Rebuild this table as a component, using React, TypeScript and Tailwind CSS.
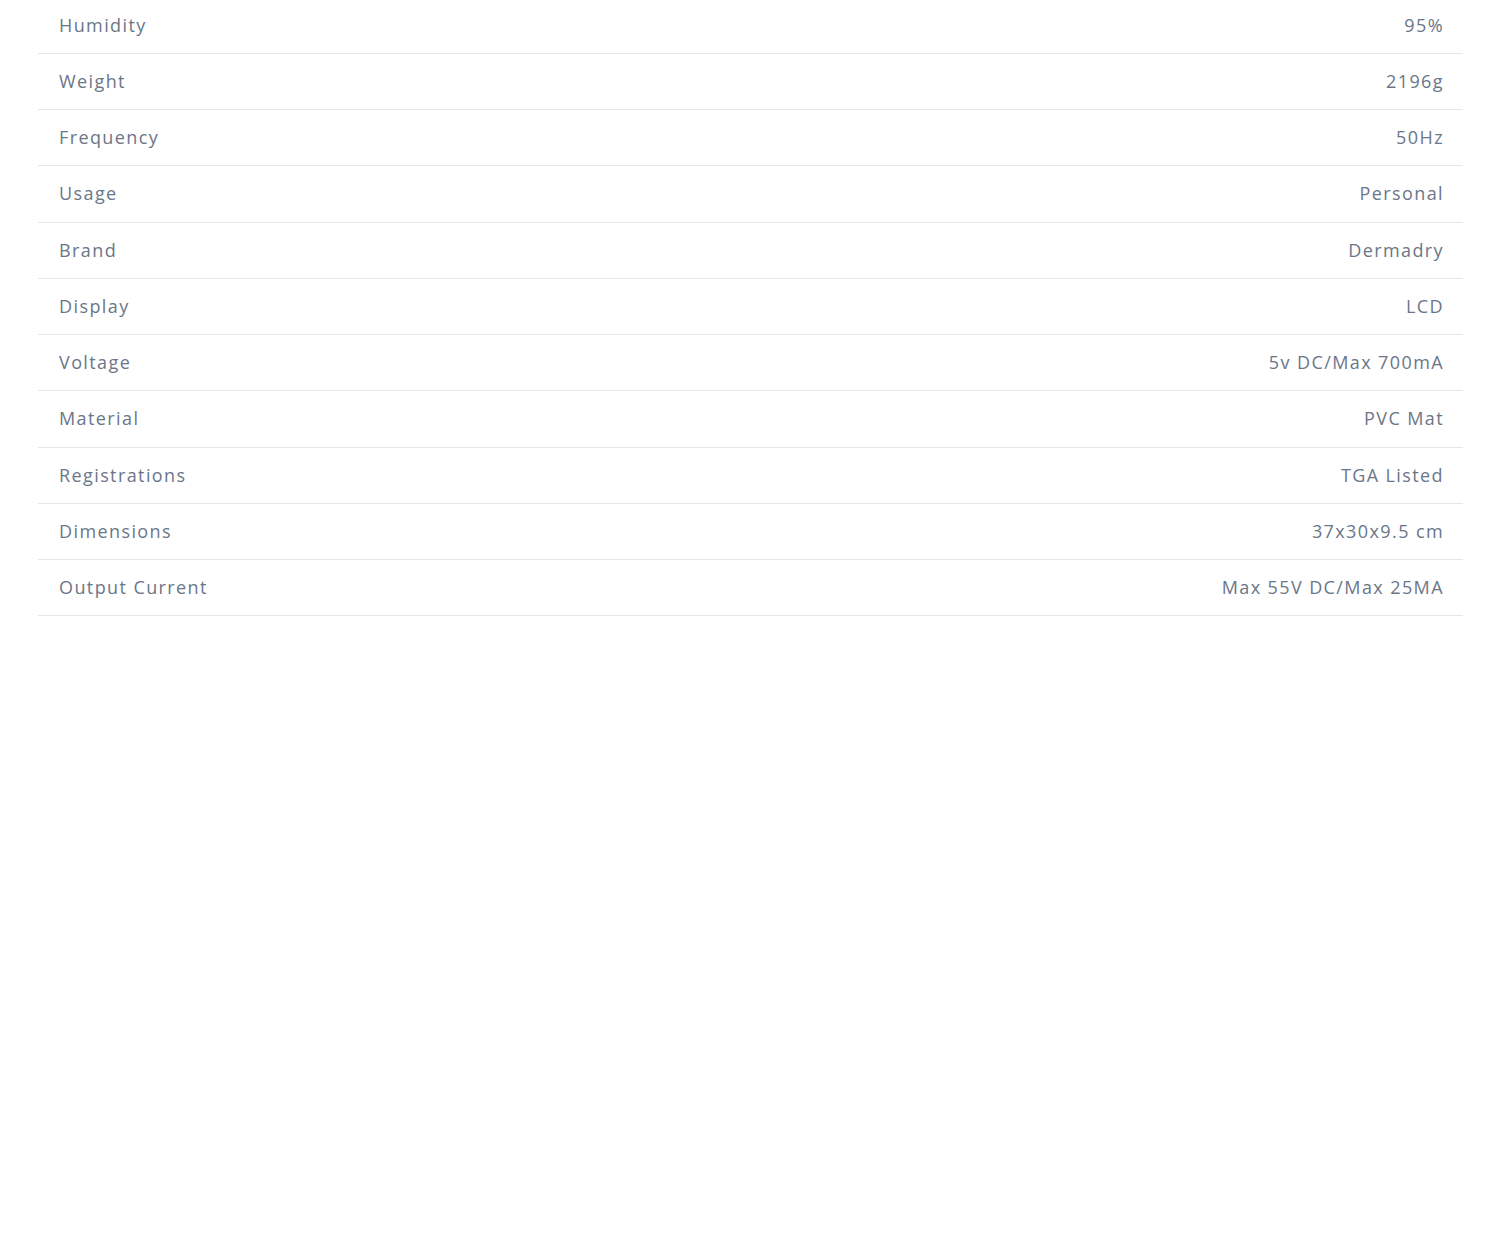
const specs: [string, string][] = [
  ["Humidity", "95%"],
  ["Weight", "2196g"],
  ["Frequency", "50Hz"],
  ["Usage", "Personal"],
  ["Brand", "Dermadry"],
  ["Display", "LCD"],
  ["Voltage", "5v DC/Max 700mA"],
  ["Material", "PVC Mat"],
  ["Registrations", "TGA Listed"],
  ["Dimensions", "37x30x9.5 cm"],
  ["Output Current", "Max 55V DC/Max 25MA"],
];

export default function App() {
  return (
    <div className="min-h-[1248px] bg-white pl-[38px] pr-[33px] font-['Open_Sans',sans-serif]">
      <div className="-mt-[2.5px]">
        {specs.map(([label, value]) => (
          <div
            key={label}
            className="flex h-[56.25px] items-center justify-between border-b border-[#e6e6e6] pl-[21px] pr-[19px] text-[18px] tracking-[1.4px] text-[#6b7689]"
          >
            <span>{label}</span>
            <span>{value}</span>
          </div>
        ))}
      </div>
    </div>
  );
}
